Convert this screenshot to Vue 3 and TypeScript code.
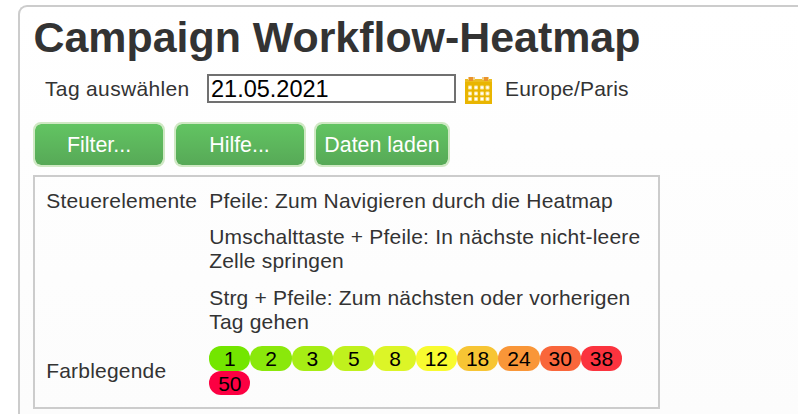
<script setup lang="ts">
interface LegendStep {
  value: number
  color: string
}

const actions: { label: string; size: string }[] = [
  { label: 'Filter...', size: 'regular' },
  { label: 'Hilfe...', size: 'regular' },
  { label: 'Daten laden', size: 'wide' },
]

const legend: LegendStep[] = [
  { value: 1, color: '#73e600' },
  { value: 2, color: '#8ae80b' },
  { value: 3, color: '#a6ed14' },
  { value: 5, color: '#c0f11d' },
  { value: 8, color: '#dcf527' },
  { value: 12, color: '#f8fb2f' },
  { value: 18, color: '#f7c534' },
  { value: 24, color: '#f99638' },
  { value: 30, color: '#f9663b' },
  { value: 38, color: '#fb333e' },
  { value: 50, color: '#fc0042' },
]

const columns = [5, 11, 17, 22.5]
const rows = [10.5, 16.5, 22]
</script>

<template>
  <main class="panel">
    <h1>Campaign Workflow-Heatmap</h1>
    <div class="date-row">
      <label for="day">Tag auswählen</label>
      <input id="day" type="text" value="21.05.2021" />
      <svg class="calendar" width="27" height="28" viewBox="0 0 27 28">
        <path fill="#e9b500" d="M0 3h27v24H0z" />
        <path fill="#ecbd20" d="M0 2h27v3H0z" />
        <path fill="#f3cf80" d="M3 0h7v3H3zM17 0h7v3h-7z" />
        <path fill="#ea922c" d="M4 0h4v4H4zM19 0h4v4h-4z" />
        <template v-for="y in rows" :key="y">
          <rect v-for="x in columns" :key="x" :x="x - 2" :y="y - 2" width="4" height="4" rx="1" fill="#fbe69a" />
          <rect v-for="x in columns" :key="'c' + x" :x="x - 1" :y="y - 1" width="2" height="2" fill="#fff" />
        </template>
      </svg>
      <span class="zone">Europe/Paris</span>
    </div>
    <div class="actions">
      <button v-for="a in actions" :key="a.label" type="button" :class="a.size">{{ a.label }}</button>
    </div>
    <section class="info">
      <div class="term">Steuerelemente</div>
      <div class="help">
        <p>Pfeile: Zum Navigieren durch die Heatmap</p>
        <p>Umschalttaste + Pfeile: In nächste nicht-leere<br />Zelle springen</p>
        <p>Strg + Pfeile: Zum nächsten oder vorherigen<br />Tag gehen</p>
      </div>
      <div class="term legend-term">Farblegende</div>
      <div class="legend">
        <span v-for="s in legend" :key="s.value" :style="{ backgroundColor: s.color }">{{ s.value }}</span>
      </div>
    </section>
  </main>
</template>

<style>
body {
  overflow: hidden;
  background: #fff;
}
</style>

<style scoped>
.panel {
  box-sizing: border-box;
  width: 780px;
  height: 409px;
  margin: 5px 0 0 18px;
  padding-left: 13px;
  border: solid #ccc;
  border-width: 2px 0 0 2px;
  border-radius: 9px 0 0 0;
  background: linear-gradient(#fff, #fcfcfc);
  color: #333;
  font: 21px/24px "Liberation Sans", Arial, sans-serif;
  letter-spacing: 0.2px;
}
h1 {
  margin: 5px 0 0 0.5px;
  font-size: 42.9px;
  line-height: 50px;
  letter-spacing: 0;
  white-space: nowrap;
}
.date-row {
  display: flex;
  align-items: center;
  height: 43px;
  margin-top: 5px;
  white-space: nowrap;
}
label {
  box-sizing: border-box;
  width: 162px;
  padding: 0 0 0 12px;
  letter-spacing: 0.35px;
}
input {
  box-sizing: border-box;
  width: 249px;
  height: 29px;
  margin: 0 0 0 12px;
  padding: 1px 2px 0;
  border: 2px solid #707070;
  border-radius: 0;
  background: #fff;
  color: #000;
  font: 23.5px/24px "Liberation Sans", Arial, sans-serif;
}
.calendar {
  margin: 4px 0 0 9px;
}
.zone {
  margin-left: 13px;
}
.actions {
  display: flex;
  margin-top: 12px;
}
button {
  box-sizing: border-box;
  width: 132px;
  height: 45px;
  margin: 0 8.5px 0 0;
  padding: 2px 0 0;
  border: 2px solid #cfe8c3;
  border-radius: 8px;
  background: linear-gradient(#62c462, #57a957);
  background-clip: padding-box;
  color: #fff;
  font: 21.4px/25px "Liberation Sans", Arial, sans-serif;
  white-space: nowrap;
}
button.wide {
  width: 136px;
}
.info {
  display: grid;
  grid-template-columns: 163px 438px;
  box-sizing: border-box;
  width: 627px;
  height: 234px;
  margin-top: 8px;
  padding: 12px 0 0 11.2px;
  border: 2px solid #ccc;
  align-content: start;
}
.help p {
  margin: 0 0 12.4px;
  white-space: nowrap;
}
.legend {
  display: flex;
  flex-wrap: wrap;
}
.legend span {
  width: 41.3px;
  height: 24.5px;
  border-radius: 12px;
  color: #000;
  letter-spacing: 0;
  line-height: 25.4px;
  text-align: center;
}
.legend-term {
  align-self: center;
}
</style>
